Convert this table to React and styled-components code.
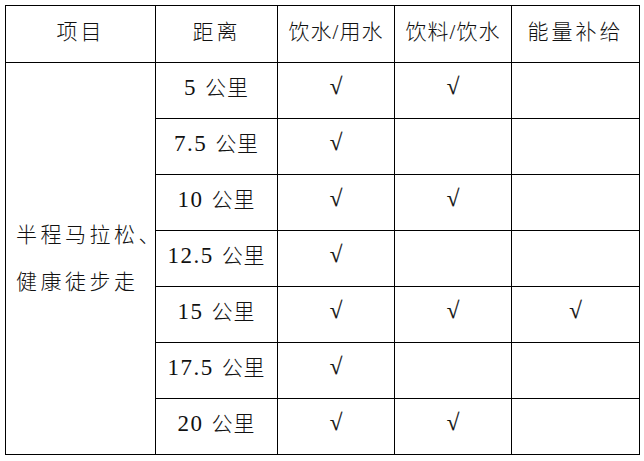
import React from "react";
import styled, { createGlobalStyle } from "styled-components";

const Global = createGlobalStyle`
  html, body { margin: 0; padding: 0; background: #fff; }
  body { font-family: "Liberation Serif", "Noto Sans CJK SC", serif; }
`;

const Wrap = styled.div`
  padding: 5px;
`;

const Table = styled.table`
  border-collapse: collapse;
  table-layout: fixed;
  width: 634px;
  color: #111;
  font-family: "Liberation Serif", "Noto Sans CJK SC", serif;
  font-weight: 300;
`;

const Row = styled.tr`
  height: ${(p) => (p.$head ? 57 : 56)}px;
`;

const Cell = styled.td`
  border: 1px solid #000;
  padding: 0 0 5px 0;
  text-align: center;
  vertical-align: middle;
  white-space: nowrap;
  font-size: 21px;
  line-height: 24px;
  letter-spacing: ${(p) => (p.$spaced ? "3px" : "1px")};
`;

const Item = styled(Cell)`
  padding: 0 0 0 10px;
  text-align: left;
  line-height: 47px;
  letter-spacing: 3.5px;
`;

const Check = styled.span`
  display: inline-block;
  font-family: "Liberation Serif", serif;
  font-size: 23px;
  font-weight: 400;
  letter-spacing: 0;
  -webkit-text-stroke: 0.2px #111;
  transform: translateY(-1px);
`;

const Num = styled.span`
  font-size: 23px;
  letter-spacing: 1.5px;
  margin-right: 8px;
`;

const rows = [
  { n: "5", a: true, b: true, c: false },
  { n: "7.5", a: true, b: false, c: false },
  { n: "10", a: true, b: true, c: false },
  { n: "12.5", a: true, b: false, c: false },
  { n: "15", a: true, b: true, c: true },
  { n: "17.5", a: true, b: false, c: false },
  { n: "20", a: true, b: true, c: false },
];

const Mark = ({ on }) => (on ? <Check>√</Check> : null);

export default function App() {
  return (
    <Wrap>
      <Global />
      <Table>
        <colgroup>
          <col style={{ width: 150 }} />
          <col style={{ width: 122 }} />
          <col style={{ width: 117 }} />
          <col style={{ width: 117 }} />
          <col style={{ width: 128 }} />
        </colgroup>
        <tbody>
          <Row $head>
            <Cell $spaced>项目</Cell>
            <Cell $spaced>距离</Cell>
            <Cell>饮水/用水</Cell>
            <Cell>饮料/饮水</Cell>
            <Cell $spaced>能量补给</Cell>
          </Row>
          {rows.map((r, i) => (
            <Row key={r.n}>
              {i === 0 && (
                <Item rowSpan={7}>
                  半程马拉松、
                  <br />
                  健康徒步走
                </Item>
              )}
              <Cell>
                <Num>{r.n}</Num>公里
              </Cell>
              <Cell>
                <Mark on={r.a} />
              </Cell>
              <Cell>
                <Mark on={r.b} />
              </Cell>
              <Cell>
                <Mark on={r.c} />
              </Cell>
            </Row>
          ))}
        </tbody>
      </Table>
    </Wrap>
  );
}
